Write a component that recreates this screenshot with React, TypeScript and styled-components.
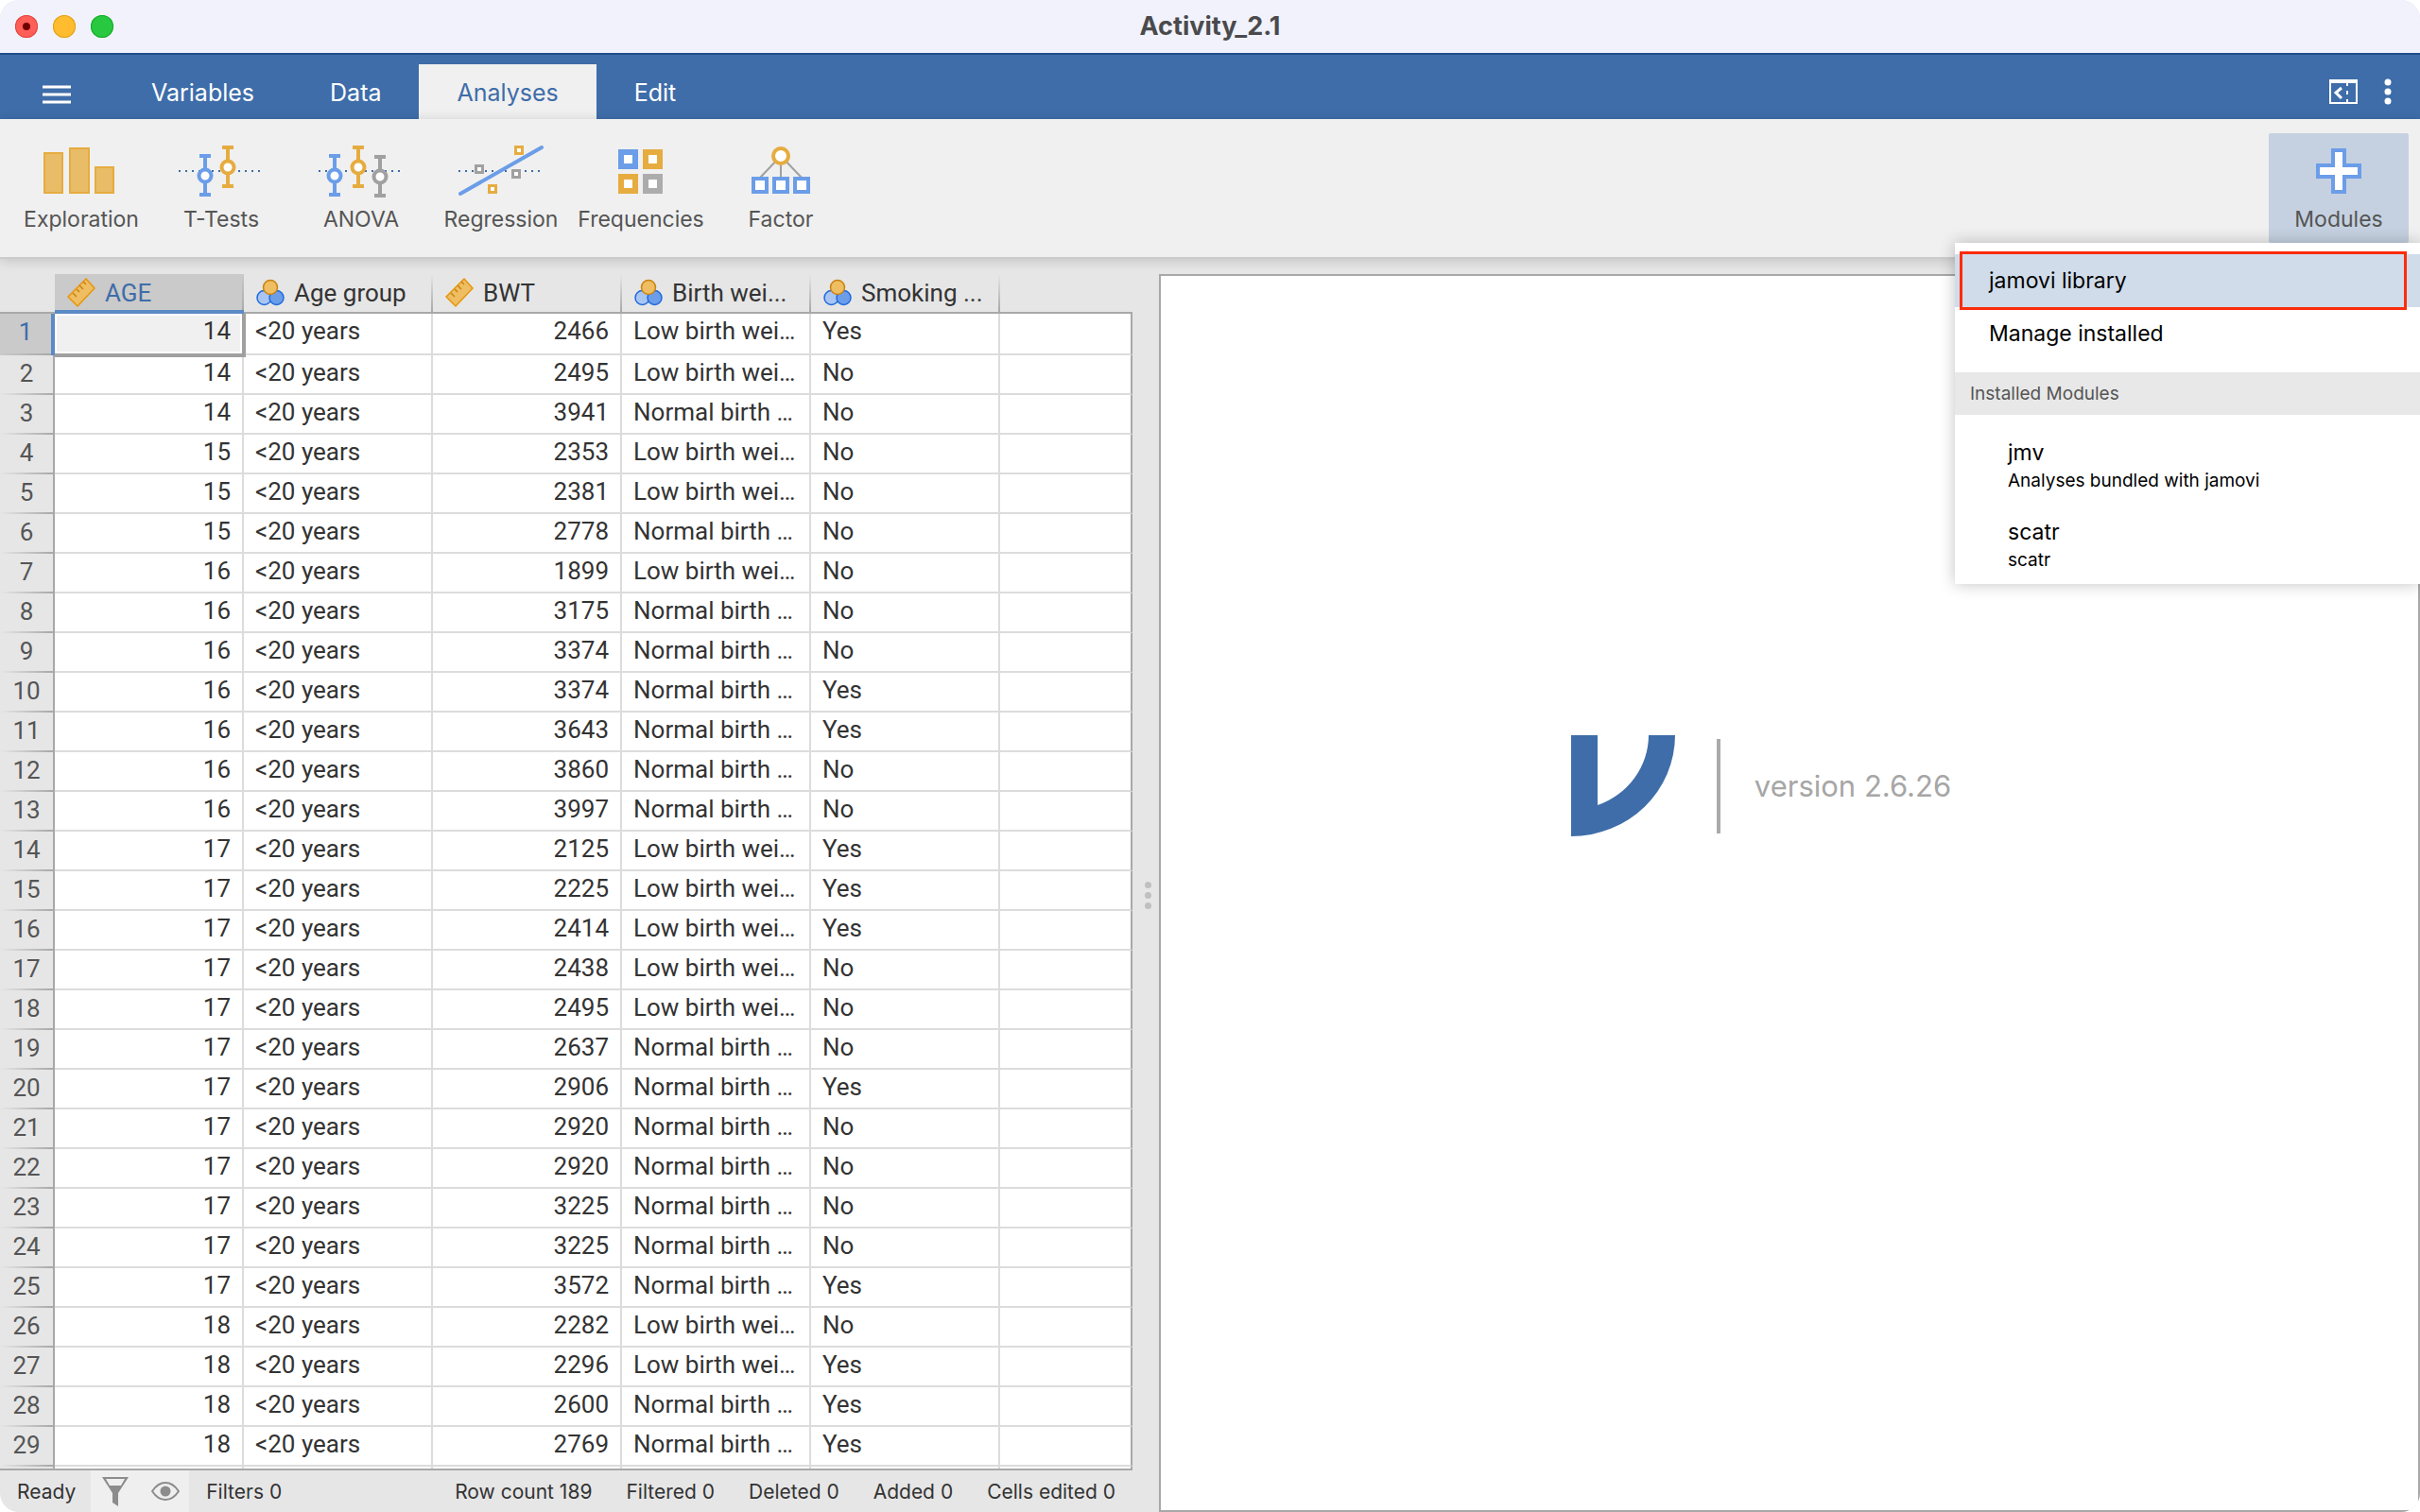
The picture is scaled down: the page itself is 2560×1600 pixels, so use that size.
import React from 'react';
import styled, { createGlobalStyle } from 'styled-components';

const ui = "Inter, 'Liberation Sans', sans-serif";
const grid = "Roboto, 'Liberation Sans', sans-serif";

const GlobalStyle = createGlobalStyle`
  *, *::before, *::after { box-sizing: border-box; }
  body { margin: 0; background: #fff; font-family: ${ui}; color: #333; }
  button { border: 0; margin: 0; padding: 0; background: none; font: inherit; color: inherit; cursor: pointer; }
  svg { display: block; flex: none; }
`;

const Window = styled.div`
  height: 100vh;
  display: flex;
  flex-direction: column;
  background: #e6e6e6;
  border-radius: 20px;
  overflow: hidden;
`;

const TitleBar = styled.header`
  flex: none;
  height: 56px;
  display: grid;
  grid-template-columns: 1fr auto 1fr;
  align-items: center;
  padding: 0 16px;
  background: #f1f2fb;
`;

const Lights = styled.div`
  display: flex;
  gap: 16px;
`;

const Light = styled.button<{ $fill: string; $edge: string }>`
  width: 24px;
  height: 24px;
  display: grid;
  place-items: center;
  border-radius: 50%;
  background: ${(p) => p.$fill};
  box-shadow: inset 0 0 0 1px ${(p) => p.$edge};
`;

const UnsavedDot = styled.span`
  width: 8px;
  height: 8px;
  border-radius: 50%;
  background: #730000;
`;

const Title = styled.h1`
  margin: 0;
  font-size: 27px;
  line-height: 32px;
  font-weight: 700;
  color: #4a4a4d;
`;

const TabBar = styled.nav`
  flex: none;
  height: 70px;
  display: flex;
  align-items: flex-end;
  border-top: 2px solid #214d8a;
  background: #3e6da9;
  color: #fff;
`;

const MenuButton = styled.button`
  width: 120px;
  height: 58px;
  display: grid;
  place-items: center;
  padding-top: 6px;
`;

const Tab = styled.button<{ $active?: boolean }>`
  height: 58px;
  padding: 2px 40px 0;
  font-size: 25px;
  line-height: 32px;
  background: ${(p) => (p.$active ? '#f0f0f0' : 'transparent')};
  color: ${(p) => (p.$active ? '#3e6da9' : '#fff')};
`;

const TabTools = styled.div`
  margin-left: auto;
  height: 58px;
  display: flex;
  align-items: center;
  gap: 28px;
  padding-right: 30px;
`;

const Ribbon = styled.div`
  position: relative;
  z-index: 2;
  flex: none;
  height: 148px;
  display: flex;
  align-items: flex-start;
  padding: 15px 12px 0;
  border-bottom: 2px solid #cccccc;
  background: #f0f0f0;
  box-shadow: 0 2px 12px rgba(0, 0, 0, 0.16);
`;

const RibbonButton = styled.button<{ $open?: boolean }>`
  width: 148px;
  height: 116px;
  display: flex;
  flex-direction: column;
  align-items: center;
  gap: 7px;
  padding-top: 10px;
  border-radius: 2px;
  font-size: 23px;
  line-height: 28px;
  color: #555;
  background: ${(p) => (p.$open ? '#c5d1e0' : 'transparent')};
`;

const ModulesSlot = styled.div`
  position: relative;
  margin-left: auto;
`;

const ModulesMenu = styled.div`
  position: absolute;
  top: 116px;
  right: -12px;
  width: 492px;
  padding: 12px 0 9px;
  background: #fff;
  box-shadow: 0 0 16px rgba(0, 0, 0, 0.24);
  color: #000;
`;

const MenuItem = styled.button<{ $active?: boolean }>`
  position: relative;
  width: 100%;
  height: 56px;
  display: block;
  padding: 0 36px;
  text-align: left;
  font-size: 23px;
  line-height: 56px;
  background: ${(p) => (p.$active ? '#d1dcea' : 'transparent')};
`;

const Highlight = styled.span`
  position: absolute;
  inset: -3px 14px -3px 5px;
  border: 3px solid #fb2c0b;
`;

const MenuHeading = styled.h2`
  margin: 13px 0 26px;
  padding: 0 16px;
  font-size: 19px;
  line-height: 45px;
  font-weight: 400;
  color: #555;
  background: #e8e8e8;
`;

const ModuleItem = styled.button`
  width: 100%;
  display: block;
  padding: 0 56px;
  text-align: left;
  font-size: 23px;
  line-height: 28px;

  & + & { margin-top: 24px; }
`;

const ModuleNote = styled.small`
  display: block;
  font-size: 19px;
  line-height: 32px;
`;

const Body = styled.main`
  flex: 1;
  min-height: 0;
  display: grid;
  grid-template-columns: 1198px 28px minmax(0, 1fr);
`;

const DataPane = styled.section`
  min-width: 0;
  min-height: 0;
  display: flex;
  flex-direction: column;
  padding-top: 16px;
`;

const Viewport = styled.div`
  flex: 1;
  min-height: 0;
  overflow: hidden;
  border-bottom: 2px solid #a8a8a8;
`;

const Sheet = styled.table`
  width: 100%;
  table-layout: fixed;
  border-collapse: separate;
  border-spacing: 0;
  font-family: ${grid};
  font-size: 26px;
  color: #333;
`;

const Corner = styled.td`
  width: 58px;
  height: 42px;
  padding: 0;
  border-bottom: 2px solid #a8a8a8;
`;

const ColHead = styled.th<{ $active?: boolean; $last?: boolean }>`
  width: ${(p) => (p.$last ? 'auto' : '200px')};
  height: 42px;
  padding: 0 8px 0 13px;
  font-weight: 400;
  text-align: left;
  color: ${(p) => (p.$active ? '#3e6da9' : '#333')};
  background: ${(p) =>
    p.$last
      ? 'none'
      : `linear-gradient(rgba(168, 168, 168, 0), #a8a8a8) right / 2px 100% no-repeat, ${
          p.$active ? '#cacaca' : '#e6e6e6'
        }`};
  border-bottom: 2px solid ${(p) => (p.$active ? '#5b8ac6' : '#a8a8a8')};
  box-shadow: ${(p) => (p.$active ? 'inset 0 -2px #5b8ac6' : 'none')};
`;

const HeadLabel = styled.span`
  height: 40px;
  display: flex;
  align-items: center;
  gap: 10px;
  white-space: nowrap;
`;

const RowHead = styled.th<{ $active?: boolean }>`
  height: ${(p) => (p.$active ? '44px' : '42px')};
  padding: 0;
  font-weight: 400;
  line-height: 38px;
  text-align: center;
  vertical-align: top;
  color: ${(p) => (p.$active ? '#3e6da9' : '#555')};
  background: linear-gradient(90deg, rgba(168, 168, 168, 0), #a8a8a8) bottom / 100% 2px no-repeat,
    ${(p) => (p.$active ? '#cacaca' : '#e6e6e6')};
  border-right: ${(p) => (p.$active ? '4px solid #5b8ac6' : '2px solid #a8a8a8')};
`;

const Cell = styled.td<{ $right?: boolean; $last?: boolean }>`
  padding: 0 12px;
  line-height: 36px;
  text-align: ${(p) => (p.$right ? 'right' : 'left')};
  white-space: nowrap;
  vertical-align: top;
  background: #fff;
  border-right: 2px solid ${(p) => (p.$last ? '#a8a8a8' : '#dcdcdc')};
  border-bottom: 2px solid #dcdcdc;
`;

const SelectedCell = styled(Cell)`
  position: relative;
  background: #f0f0f0;

  &::after {
    content: '';
    position: absolute;
    inset: 0 -4px -4px 0;
    border: solid #a0a0a0;
    border-width: 0 4px 4px 0;
    box-shadow: inset 0 0 0 2px #fff;
  }
`;

const StatusBar = styled.footer`
  flex: none;
  height: 44px;
  display: flex;
  align-items: center;
  padding: 0 18px;
  font-size: 21px;
  line-height: 24px;
`;

const StatusText = styled.span`
  padding-top: 2px;
`;

const FilterTools = styled.div`
  height: 44px;
  display: flex;
  align-items: center;
  gap: 24px;
  margin: 0 18px 0 16px;
  padding: 0 10px;
  background: #efefef;
`;

const Counts = styled.div`
  margin-left: auto;
  display: flex;
  gap: 36px;
`;

const Splitter = styled.div`
  display: flex;
  flex-direction: column;
  align-items: center;
  justify-content: center;
  gap: 4px;
  padding: 20px 0 0 4px;
`;

const Grip = styled.span`
  width: 7px;
  height: 7px;
  border-radius: 50%;
  background: #c0c0c0;
`;

const Results = styled.section`
  margin-top: 16px;
  display: flex;
  align-items: flex-start;
  justify-content: center;
  padding: 486px 60px 0 0;
  border: 2px solid #a8a8a8;
  background: #fff;
`;

const Brand = styled.div`
  display: flex;
  align-items: center;
`;

const Version = styled.p`
  margin: 0 0 0 44px;
  padding-left: 36px;
  border-left: 4px solid #aaa;
  font-size: 31px;
  line-height: 100px;
  color: #a6a6a6;
`;

const BLUE = '#6b9de8';
const GOLD = '#e6ac40';
const GREY = '#a0a0a0';

const Baseline = () => (
  <path d="M1 30H92" stroke="#3e6da9" strokeWidth="2" strokeDasharray="2 5" />
);

const Whisker = ({ x, y, color }: { x: number; y: number; color: string }) => (
  <g stroke={color} strokeWidth="4" fill="none">
    <path d={`M${x - 6} ${y - 21}h12M${x - 6} ${y + 20}h12M${x} ${y - 21}v41`} />
    <circle cx={x} cy={y} r="6.5" fill="#fff" />
  </g>
);

const Box = ({ x, y, s, w, color }: { x: number; y: number; s: number; w: number; color: string }) => (
  <rect x={x + w / 2} y={y + w / 2} width={s - w} height={s - w} fill="#fff" stroke={color} strokeWidth={w} />
);

const ExplorationIcon = () => (
  <svg width="92" height="60" viewBox="0 0 92 60" fill="#e9bc67" stroke={GOLD} strokeWidth="2">
    <path d="M7 11h19v42H7zM34 6h20v47H34zM61 26h19v27H61z" />
  </svg>
);
const TTestsIcon = () => (
  <svg width="92" height="60" viewBox="0 0 92 60">
    <Baseline />
    <Whisker x={29} y={35} color={BLUE} />
    <Whisker x={53} y={26} color={GOLD} />
  </svg>
);
const AnovaIcon = () => (
  <svg width="92" height="60" viewBox="0 0 92 60">
    <Baseline />
    <Whisker x={18} y={35} color={BLUE} />
    <Whisker x={43} y={26} color={GOLD} />
    <Whisker x={66} y={36} color={GREY} />
  </svg>
);
const RegressionIcon = () => (
  <svg width="92" height="60" viewBox="0 0 92 60">
    <Baseline />
    <path d="M3 54L89 5" stroke={BLUE} strokeWidth="4" strokeLinecap="round" />
    <Box x={18} y={23} s={10} w={3} color={GREY} />
    <Box x={57} y={28} s={10} w={3} color={GREY} />
    <Box x={60} y={3} s={10} w={3} color={GOLD} />
    <Box x={32} y={44} s={10} w={3} color={GOLD} />
  </svg>
);
const FrequenciesIcon = () => (
  <svg width="92" height="60" viewBox="0 0 92 60">
    <Box x={22} y={7} s={21} w={6} color={BLUE} />
    <Box x={48} y={7} s={21} w={6} color={GOLD} />
    <Box x={22} y={33} s={21} w={6} color={GOLD} />
    <Box x={48} y={33} s={21} w={6} color="#acacac" />
  </svg>
);
const FactorIcon = () => (
  <svg width="92" height="60" viewBox="0 0 92 60">
    <path d="M46 14L24 37M46 14v23M46 14l22 23" stroke={GREY} strokeWidth="2" />
    <circle cx="46" cy="14" r="8" fill="#fff" stroke={GOLD} strokeWidth="4" />
    <Box x={15} y={36} s={18} w={4} color={BLUE} />
    <Box x={37} y={36} s={18} w={4} color={BLUE} />
    <Box x={59} y={36} s={18} w={4} color={BLUE} />
  </svg>
);
const PlusIcon = () => (
  <svg width="92" height="60" viewBox="0 0 92 60">
    <path d="M40 8h12v16h16v12H52v16H40V36H24V24h16z" fill="#fff" stroke={BLUE} strokeWidth="4" />
  </svg>
);

const RulerIcon = () => (
  <svg width="30" height="32" viewBox="0 0 30 32">
    <path d="M20 1l9 10L11 30 1 20z" fill="#efbd62" stroke="#e6960c" strokeWidth="1.5" strokeLinejoin="round" />
    <path d="M17 4l3 3M13 8l4 4M10 12l3 3M6 16l4 4" stroke="#c98410" strokeWidth="1.5" />
  </svg>
);
const NominalIcon = () => (
  <svg width="30" height="32" viewBox="0 0 30 32" strokeWidth="1.5">
    <circle cx="8.5" cy="21" r="7.5" fill="#a9c6f2" stroke="#1f6ade" />
    <circle cx="21.5" cy="21" r="7.5" fill="#6b9de8" stroke="#1f6ade" />
    <circle cx="15" cy="10" r="7.5" fill="#efbd62" stroke="#c98410" />
  </svg>
);

const analyses = [
  { name: 'Exploration', icon: <ExplorationIcon /> },
  { name: 'T-Tests', icon: <TTestsIcon /> },
  { name: 'ANOVA', icon: <AnovaIcon /> },
  { name: 'Regression', icon: <RegressionIcon /> },
  { name: 'Frequencies', icon: <FrequenciesIcon /> },
  { name: 'Factor', icon: <FactorIcon /> },
];

const columns = [
  { name: 'AGE', icon: <RulerIcon /> },
  { name: 'Age group', icon: <NominalIcon /> },
  { name: 'BWT', icon: <RulerIcon /> },
  { name: 'Birth wei...', icon: <NominalIcon /> },
  { name: 'Smoking ...', icon: <NominalIcon /> },
];

const records: [number, number, boolean][] = [
  [14, 2466, true], [14, 2495, false], [14, 3941, false], [15, 2353, false], [15, 2381, false],
  [15, 2778, false], [16, 1899, false], [16, 3175, false], [16, 3374, false], [16, 3374, true],
  [16, 3643, true], [16, 3860, false], [16, 3997, false], [17, 2125, true], [17, 2225, true],
  [17, 2414, true], [17, 2438, false], [17, 2495, false], [17, 2637, false], [17, 2906, true],
  [17, 2920, false], [17, 2920, false], [17, 3225, false], [17, 3225, false], [17, 3572, true],
  [18, 2282, false], [18, 2296, true], [18, 2600, true], [18, 2769, true],
];

// Labels are shortened to the width of a default column.
const weightClass = (grams: number) => (grams < 2500 ? 'Low birth wei…' : 'Normal birth …');

const counts = ['Row count 189', 'Filtered 0', 'Deleted 0', 'Added 0', 'Cells edited 0'];

export default function App() {
  return (
    <Window>
      <GlobalStyle />
      <TitleBar>
        <Lights>
          <Light $fill="#ff5f57" $edge="#e2463f" aria-label="Close"><UnsavedDot /></Light>
          <Light $fill="#febc2e" $edge="#e1a116" aria-label="Minimise" />
          <Light $fill="#28c840" $edge="#12ac28" aria-label="Zoom" />
        </Lights>
        <Title>Activity_2.1</Title>
      </TitleBar>

      <TabBar>
        <MenuButton aria-label="Menu">
          <svg width="30" height="22" viewBox="0 0 30 22" stroke="#fff" strokeWidth="3">
            <path d="M0 3h30M0 11h30M0 19h30" />
          </svg>
        </MenuButton>
        <Tab>Variables</Tab>
        <Tab>Data</Tab>
        <Tab $active>Analyses</Tab>
        <Tab>Edit</Tab>
        <TabTools>
          <button aria-label="Hide results">
            <svg width="30" height="26" viewBox="0 0 30 26" fill="none" stroke="#fff">
              <path d="M0 2h30" strokeWidth="4" />
              <path d="M1 1h28v24H1z" strokeWidth="2" />
              <path d="M19 4v3m0 5v4m0 5v3" strokeWidth="2" />
              <path d="M13 9l-6 5 6 6" strokeWidth="3" />
            </svg>
          </button>
          <button aria-label="More options">
            <svg width="8" height="28" viewBox="0 0 8 28" fill="#fff">
              <circle cx="4" cy="4" r="3.5" /><circle cx="4" cy="14" r="3.5" /><circle cx="4" cy="24" r="3.5" />
            </svg>
          </button>
        </TabTools>
      </TabBar>

      <Ribbon>
        {analyses.map((a) => (
          <RibbonButton key={a.name}>{a.icon}{a.name}</RibbonButton>
        ))}
        <ModulesSlot>
          <RibbonButton $open><PlusIcon />Modules</RibbonButton>
          <ModulesMenu>
            <MenuItem $active>jamovi library<Highlight /></MenuItem>
            <MenuItem>Manage installed</MenuItem>
            <MenuHeading>Installed Modules</MenuHeading>
            <ModuleItem>jmv<ModuleNote>Analyses bundled with jamovi</ModuleNote></ModuleItem>
            <ModuleItem>scatr<ModuleNote>scatr</ModuleNote></ModuleItem>
          </ModulesMenu>
        </ModulesSlot>
      </Ribbon>

      <Body>
        <DataPane>
          <Viewport>
            <Sheet>
              <thead>
                <tr>
                  <Corner />
                  {columns.map((c, i) => (
                    <ColHead key={c.name} scope="col" $active={i === 0}>
                      <HeadLabel>{c.icon}{c.name}</HeadLabel>
                    </ColHead>
                  ))}
                  <ColHead $last />
                </tr>
              </thead>
              <tbody>
                {records.map(([age, grams, smoker], i) => {
                  const AgeCell = i === 0 ? SelectedCell : Cell;
                  return (
                    <tr key={i}>
                      <RowHead scope="row" $active={i === 0}>{i + 1}</RowHead>
                      <AgeCell $right>{age}</AgeCell>
                      <Cell>&lt;20 years</Cell>
                      <Cell $right>{grams}</Cell>
                      <Cell>{weightClass(grams)}</Cell>
                      <Cell>{smoker ? 'Yes' : 'No'}</Cell>
                      <Cell $last />
                    </tr>
                  );
                })}
                <tr>
                  <RowHead />
                  <Cell /><Cell /><Cell /><Cell /><Cell /><Cell $last />
                </tr>
              </tbody>
            </Sheet>
          </Viewport>
          <StatusBar>
            <StatusText>Ready</StatusText>
            <FilterTools>
              <button aria-label="Filters">
                <svg width="30" height="32" viewBox="0 0 30 32">
                  <path d="M2 1h28L19 18v14l-6-4V18z" fill="#8c8c8c" />
                  <path d="M6 3h20l-4 7H10z" fill="#efefef" />
                </svg>
              </button>
              <button aria-label="Show filtered rows">
                <svg width="30" height="20" viewBox="0 0 30 20" fill="none" stroke="#8c8c8c" strokeWidth="2">
                  <path d="M1 10Q7 1 15 1t14 9q-6 9-14 9T1 10z" />
                  <circle cx="15" cy="10" r="4.5" fill="#8c8c8c" />
                </svg>
              </button>
            </FilterTools>
            <StatusText>Filters 0</StatusText>
            <Counts>{counts.map((c) => <StatusText key={c}>{c}</StatusText>)}</Counts>
          </StatusBar>
        </DataPane>
        <Splitter><Grip /><Grip /><Grip /></Splitter>
        <Results>
          <Brand>
            <svg width="110" height="108" viewBox="0 0 110 108" fill="#3e6da9">
              <path d="M0 0h28v74A82 79 0 0 0 82 0h28A110 107 0 0 1 0 107z" />
            </svg>
            <Version>version 2.6.26</Version>
          </Brand>
        </Results>
      </Body>
    </Window>
  );
}
